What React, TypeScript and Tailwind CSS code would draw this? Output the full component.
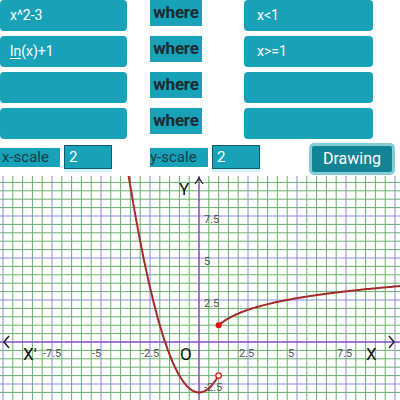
import React from 'react';

const W = 400;
const H = 224;
const OX = 199;
const OY = 166;
const UX = 19.6;
const UY = 16.8;

type Row = { expr: React.ReactNode; cond: string };

const rows: Row[] = [
  { expr: 'x^2-3', cond: 'x<1' },
  {
    expr: (
      <>
        <span className="underline underline-offset-2">ln</span>(x)+1
      </>
    ),
    cond: 'x>=1',
  },
  { expr: '', cond: '' },
  { expr: '', cond: '' },
];

const curve = (f: (x: number) => number, from: number, to: number) => {
  const pts: string[] = [];
  for (let x = from; x <= to + 0.0001; x += 0.05) {
    pts.push(`${(OX + x * UX).toFixed(1)},${(OY - f(x) * UY).toFixed(1)}`);
  }
  return pts.join(' ');
};

const Graph: React.FC = () => {
  const vLines: { x: number; major: boolean }[] = [];
  for (let k = -21; k <= 21; k++) {
    const x = OX + (k * UX) / 2;
    if (x < 0 || x > W || k === 0) continue;
    vLines.push({ x, major: k % 5 === 0 });
  }
  const hLines: { y: number; major: boolean }[] = [];
  for (let k = -20; k <= 8; k++) {
    const y = OY + (k * UY) / 2;
    if (y < 0 || y > H || k === 0) continue;
    hLines.push({ y, major: k % 5 === 0 });
  }

  const xLabels = [-7.5, -5, -2.5, 2.5, 5, 7.5];
  const yLabels = [7.5, 5, 2.5, -2.5];

  return (
    <svg width={W} height={H} className="block" fontFamily="Roboto, sans-serif">
      {vLines.filter((l) => !l.major).map((l) => (
        <line key={'vg' + l.x} x1={l.x} y1={0} x2={l.x} y2={H} stroke="#6aae6a" strokeWidth={1} />
      ))}
      {hLines.filter((l) => !l.major).map((l) => (
        <line key={'hg' + l.y} x1={0} y1={l.y} x2={W} y2={l.y} stroke="#6aae6a" strokeWidth={1} />
      ))}
      {vLines.filter((l) => l.major).map((l) => (
        <line key={'vb' + l.x} x1={l.x} y1={0} x2={l.x} y2={H} stroke="#8a8ae4" strokeWidth={1} />
      ))}
      {hLines.filter((l) => l.major).map((l) => (
        <line key={'hb' + l.y} x1={0} y1={l.y} x2={W} y2={l.y} stroke="#8a8ae4" strokeWidth={1} />
      ))}

      {/* axes */}
      <line x1={0} y1={OY} x2={W} y2={OY} stroke="#8a48c8" strokeWidth={1.5} />
      <line x1={OX} y1={0} x2={OX} y2={H} stroke="#8a48c8" strokeWidth={1.5} />
      <polyline points={`${OX - 4},${8} ${OX},${2} ${OX + 4},${8}`} fill="none" stroke="#222" strokeWidth={1.3} />
      <polyline points={`9,${OY - 6} 4,${OY} 9,${OY + 6}`} fill="none" stroke="#222" strokeWidth={1.5} />
      <polyline points={`389,${OY - 6} 394,${OY} 389,${OY + 6}`} fill="none" stroke="#222" strokeWidth={1.5} />

      {xLabels.map((v) => (
        <text key={'xl' + v} x={OX + v * UX - 9} y={OY + 15} fontSize={11} fill="#555">
          {v}
        </text>
      ))}
      {yLabels.map((v) => (
        <text key={'yl' + v} x={OX + 5} y={OY - v * UY + 7} fontSize={11} fill="#555">
          {v}
        </text>
      ))}

      <text x={23} y={OY + 18} fontSize={17} fill="#111">X'</text>
      <text x={180} y={OY + 18} fontSize={17} fill="#111">O</text>
      <text x={366} y={OY + 18} fontSize={17} fill="#111">X</text>
      <text x={179} y={19} fontSize={17} fill="#111">Y</text>

      {/* functions */}
      <polyline points={curve((x) => x * x - 3, -3.75, 1)} fill="none" stroke="#a52a2a" strokeWidth={2} />
      <polyline points={curve((x) => Math.log(x) + 1, 1, 10.4)} fill="none" stroke="#a52a2a" strokeWidth={2} />
      <circle cx={OX + UX} cy={OY - 1 * UY} r={3} fill="#e01010" />
      <circle cx={OX + UX} cy={OY + 2 * UY} r={2.8} fill="#fff" stroke="#e01010" strokeWidth={1.3} />
    </svg>
  );
};

export default function App() {
  return (
    <div className="w-[400px] h-[400px] overflow-hidden bg-white font-['Roboto',sans-serif]">
      <div className="flex flex-col gap-[5px]">
        {rows.map((r, i) => (
          <div key={i} className="flex items-start h-[31px]">
            <div className="w-[127px] h-[31px] bg-[#17a2b8] rounded-[4px] flex items-center pl-[10px] text-white text-[14px]">
              {r.expr}
            </div>
            <div className="ml-[23px] w-[52px] h-[26px] bg-[#17a2b8] flex items-center justify-center text-[#1c2a30] text-[17px] font-bold tracking-[-0.2px]">
              where
            </div>
            <div className="ml-[42px] w-[129px] h-[31px] bg-[#17a2b8] rounded-[4px] flex items-center pl-[13px] text-white text-[14px]">
              {r.cond}
            </div>
          </div>
        ))}
      </div>

      <div className="flex items-start h-[33px] mt-[4px]">
        <div className="mt-[5px] w-[60px] h-[19px] bg-[#17a2b8] flex items-center pl-[2px] text-[15px] text-[#1b3b45]">
          x-scale
        </div>
        <div className="mt-[2px] ml-[4px] w-[48px] h-[24px] bg-[#17a2b8] border border-[#0f5d68] flex items-center pl-[4px] text-white text-[15px] shadow-[0_3px_0_#d3f5fa]">
          2
        </div>
        <div className="mt-[5px] ml-[38px] w-[58px] h-[19px] bg-[#17a2b8] flex items-center text-[15px] text-[#1b3b45]">
          y-scale
        </div>
        <div className="mt-[2px] ml-[4px] w-[48px] h-[24px] bg-[#17a2b8] border border-[#0f5d68] flex items-center pl-[4px] text-white text-[15px] shadow-[0_3px_0_#d3f5fa]">
          2
        </div>
        <button className="ml-[49px] w-[86px] h-[32px] bg-[#138496] border-[3px] border-[#85ccd6] rounded-[5px] text-white text-[16px] flex items-center justify-center">
          Drawing
        </button>
      </div>

      <Graph />
    </div>
  );
}
